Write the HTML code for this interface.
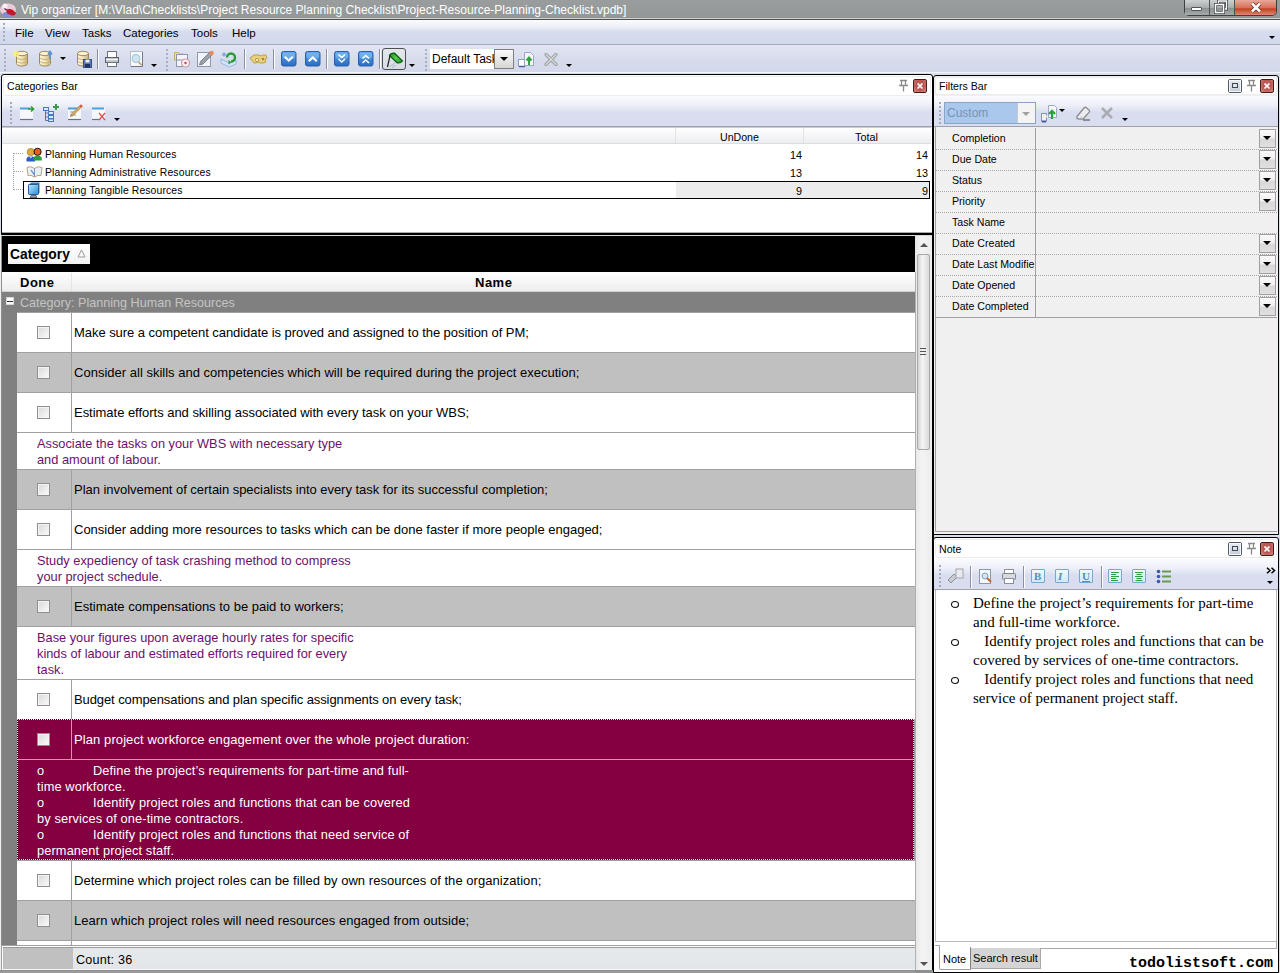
<!DOCTYPE html>
<html><head><meta charset="utf-8">
<style>
*{margin:0;padding:0;box-sizing:border-box}
html,body{width:1280px;height:973px;overflow:hidden;background:#d9deec;font-family:"Liberation Sans",sans-serif;font-size:12px;color:#000}
.a{position:absolute}
.t{position:absolute;white-space:pre;line-height:1}
.grip{position:absolute;width:2px;background:repeating-linear-gradient(#a4aac0 0 2px,transparent 2px 4px)}
.sep{position:absolute;width:1px;background:#8a90a0;box-shadow:1px 0 0 #fff}
.tri{position:absolute;width:0;height:0;border-left:4px solid transparent;border-right:4px solid transparent;border-top:4px solid #000}
.chk{position:absolute;width:13px;height:13px;border:1px solid #8e8f8f;background:linear-gradient(135deg,#d8d8d8,#fbfbfb);box-shadow:inset 0 0 0 1px #f4f4f4}
.note{color:#6c106c;font-size:12.8px;line-height:16px}
.bluebtn{display:none}
</style></head><body>
<div class="a" style="left:0px;top:0px;width:1280px;height:973px;background:#d9deec"></div>
<div class="a" style="left:0px;top:0px;width:1280px;height:20px;background:linear-gradient(#999d9e,#939798)"></div>
<div class="a" style="left:0px;top:17px;width:1280px;height:1px;background:#8e9293"></div>
<div class="a" style="left:0px;top:18px;width:1280px;height:1px;background:#d2d6d6"></div>
<div class="a" style="left:0px;top:19px;width:1280px;height:1px;background:#4a4e4e"></div>
<svg class="a" style="left:0px;top:2px" width="17" height="16" viewBox="0 0 17 16"><ellipse cx="8" cy="7.5" rx="8" ry="6" fill="#eccbd8"/><ellipse cx="8" cy="12.5" rx="5.5" ry="2.8" fill="#7a8ee0"/><path d="M6 7.5q4-1 7 .5l3 3q-1 3-4 2.5l-5-2z" fill="#c4182a"/><circle cx="5" cy="4" r="2.6" fill="#f8eef8"/><path d="M4.5 6.5l2 1.5" stroke="#403040" stroke-width="1.2"/></svg>
<div class="t" style="left:21px;top:4px;font-size:12px;color:#fff">Vip organizer [M:\Vlad\Checklists\Project Resource Planning Checklist\Project-Resource-Planning-Checklist.vpdb]</div>
<div class="a" style="left:1184px;top:0px;width:93px;height:16px;border:1px solid #3c4040;border-top:none;border-radius:0 0 5px 5px;overflow:hidden;background:#9da3a3"></div>
<div class="a" style="left:1185px;top:0px;width:24px;height:15px;background:linear-gradient(#cdd1d1,#a9afaf 50%,#8c9292 55%,#a4aaaa)"></div>
<div class="a" style="left:1209px;top:0px;width:1px;height:15px;background:#4e5252"></div>
<div class="a" style="left:1210px;top:0px;width:24px;height:15px;background:linear-gradient(#cdd1d1,#a9afaf 50%,#8c9292 55%,#a4aaaa)"></div>
<div class="a" style="left:1234px;top:0px;width:1px;height:15px;background:#4e5252"></div>
<div class="a" style="left:1235px;top:0px;width:41px;height:15px;background:linear-gradient(#e9a899,#d8705a 50%,#c4421f 60%,#dc8a76);border-radius:0 0 4px 0"></div>
<div class="a" style="left:1191px;top:7px;width:11px;height:4px;background:#fff;border:1px solid #555;border-radius:1px"></div>
<svg class="a" style="left:1213px;top:0px" width="16" height="15" viewBox="0 0 16 15"><path d="M5.5 3.5v-2.5h8v8h-2" fill="none" stroke="#3a3e3e" stroke-width="3"/><path d="M5.5 3.5v-2.5h8v8h-2" fill="none" stroke="#fff" stroke-width="1.4"/><rect x="2.5" y="4.5" width="8" height="8" fill="none" stroke="#3a3e3e" stroke-width="3"/><rect x="2.5" y="4.5" width="8" height="8" fill="none" stroke="#fff" stroke-width="1.6"/></svg>
<svg class="a" style="left:1250px;top:2px" width="12" height="11" viewBox="0 0 12 11"><path d="M2 1.5l8 8M10 1.5l-8 8" stroke="#6a2a1a" stroke-width="4"/><path d="M2 1.5l8 8M10 1.5l-8 8" stroke="#fff" stroke-width="2.6"/></svg>
<div class="a" style="left:0px;top:20px;width:1280px;height:25px;background:linear-gradient(#fafbfd 0,#eef0f8 28%,#d6dcee 50%,#d3d9ec 100%);border-bottom:1px solid #a3a8b5"></div>
<div class="a" style="left:3px;top:23px;width:2px;height:19px;background:repeating-linear-gradient(#a4aac0 0 2px,transparent 2px 4px)"></div>
<div class="t" style="left:15px;top:28px;font-size:11.5px">File</div>
<div class="t" style="left:45px;top:28px;font-size:11.5px">View</div>
<div class="t" style="left:82px;top:28px;font-size:11.5px">Tasks</div>
<div class="t" style="left:123px;top:28px;font-size:11.5px">Categories</div>
<div class="t" style="left:191px;top:28px;font-size:11.5px">Tools</div>
<div class="t" style="left:232px;top:28px;font-size:11.5px">Help</div>
<div class="a" style="left:1269px;top:36px;width:0;height:0;border-left:3px solid transparent;border-right:3px solid transparent;border-top:3px solid #000"></div>
<div class="a" style="left:0px;top:45px;width:1280px;height:28px;background:linear-gradient(#e2e6f3,#d6dbec 60%,#d3d8ea);border-bottom:1px solid #a0a5b2"></div>
<div class="a" style="left:0px;top:72px;width:1280px;height:1px;background:#f4f5f9"></div>
<div class="a" style="left:4px;top:49px;width:2px;height:2px;background:#98a0b6;border-radius:1px"></div>
<div class="a" style="left:4px;top:53px;width:2px;height:2px;background:#98a0b6;border-radius:1px"></div>
<div class="a" style="left:4px;top:57px;width:2px;height:2px;background:#98a0b6;border-radius:1px"></div>
<div class="a" style="left:4px;top:61px;width:2px;height:2px;background:#98a0b6;border-radius:1px"></div>
<div class="a" style="left:4px;top:65px;width:2px;height:2px;background:#98a0b6;border-radius:1px"></div>
<div class="a" style="left:4px;top:69px;width:2px;height:2px;background:#98a0b6;border-radius:1px"></div>
<svg class="a" style="left:12px;top:50px" width="18" height="18" viewBox="0 0 18 18"><defs><linearGradient id="dbg" x1="0" x2="1"><stop offset="0" stop-color="#fff8dc"/><stop offset=".5" stop-color="#f3e3b0"/><stop offset="1" stop-color="#c9b07a"/></linearGradient></defs><path d="M4.5 3.5v10c0 1.5 2.5 2.5 5.5 2.5s5.5-1 5.5-2.5v-10" fill="url(#dbg)" stroke="#9c8a5c"/><ellipse cx="10" cy="3.5" rx="5.5" ry="2.2" fill="#fbf2d2" stroke="#9c8a5c"/><path d="M5 8c1 1 3 1.5 5 1.5s4-.5 5-1.5M5 11.5c1 1 3 1.5 5 1.5s4-.5 5-1.5" fill="none" stroke="#b8a272" stroke-width=".8"/><circle cx="4" cy="4" r="3" fill="#fff46a" opacity=".8"/></svg>
<svg class="a" style="left:37px;top:50px" width="18" height="18" viewBox="0 0 18 18"><path d="M2.5 3.5v10c0 1.5 2.5 2.5 5.5 2.5s5.5-1 5.5-2.5v-10" fill="url(#dbg)" stroke="#9c8a5c"/><ellipse cx="8" cy="3.5" rx="5.5" ry="2.2" fill="#fbf2d2" stroke="#9c8a5c"/><path d="M3 8c1 1 3 1.5 5 1.5s4-.5 5-1.5M3 11.5c1 1 3 1.5 5 1.5s4-.5 5-1.5" fill="none" stroke="#b8a272" stroke-width=".8"/><path d="M13 9V2M11 4.5l2-3 2 3" fill="none" stroke="#5c8fd6" stroke-width="1.6"/></svg>
<div class="a" style="left:60px;top:57px;width:0;height:0;border-left:3.5px solid transparent;border-right:3.5px solid transparent;border-top:3.5px solid #000"></div>
<svg class="a" style="left:75px;top:50px" width="18" height="18" viewBox="0 0 18 18"><path d="M2.5 3.5v10c0 1.5 2.5 2.5 5.5 2.5s5.5-1 5.5-2.5v-10" fill="url(#dbg)" stroke="#9c8a5c"/><ellipse cx="8" cy="3.5" rx="5.5" ry="2.2" fill="#fbf2d2" stroke="#9c8a5c"/><path d="M3 8c1 1 3 1.5 5 1.5s4-.5 5-1.5M3 11.5c1 1 3 1.5 5 1.5s4-.5 5-1.5" fill="none" stroke="#b8a272" stroke-width=".8"/><rect x="8.5" y="9.5" width="8" height="8" fill="#5e74b0" stroke="#3a4c80"/><rect x="10.5" y="9.5" width="4" height="3" fill="#e8ecf6"/><rect x="10" y="14" width="5" height="3.5" fill="#203060"/></svg>
<div class="a" style="left:97px;top:49px;width:1px;height:20px;background:#8a90a0;box-shadow:1px 0 0 #fff"></div>
<svg class="a" style="left:104px;top:50px" width="16" height="18" viewBox="0 0 16 18"><rect x="3.5" y="1.5" width="9" height="6" fill="#fff" stroke="#6c7078"/><rect x="1.5" y="7.5" width="13" height="5" fill="#c4c8ce" stroke="#5c6068"/><path d="M2 9.5h12" stroke="#fff" stroke-width=".8"/><rect x="3.5" y="12.5" width="9" height="4" fill="#fff" stroke="#6c7078"/></svg>
<svg class="a" style="left:130px;top:50px" width="14" height="18" viewBox="0 0 14 18"><rect x=".5" y="1.5" width="12" height="15" fill="#f6f8fb" stroke="#b8bec8"/><path d="M12.5 2v14.5H1" stroke="#707680" fill="none"/><circle cx="6" cy="8.5" r="4" fill="#cde6f0" stroke="#9cc4d8"/><path d="M8.5 12l3 3" stroke="#d89060" stroke-width="1.6"/></svg>
<div class="a" style="left:151px;top:64px;width:0;height:0;border-left:3px solid transparent;border-right:3px solid transparent;border-top:3px solid #000"></div>
<div class="a" style="left:166px;top:49px;width:2px;height:2px;background:#98a0b6;border-radius:1px"></div>
<div class="a" style="left:166px;top:53px;width:2px;height:2px;background:#98a0b6;border-radius:1px"></div>
<div class="a" style="left:166px;top:57px;width:2px;height:2px;background:#98a0b6;border-radius:1px"></div>
<div class="a" style="left:166px;top:61px;width:2px;height:2px;background:#98a0b6;border-radius:1px"></div>
<div class="a" style="left:166px;top:65px;width:2px;height:2px;background:#98a0b6;border-radius:1px"></div>
<div class="a" style="left:166px;top:69px;width:2px;height:2px;background:#98a0b6;border-radius:1px"></div>
<svg class="a" style="left:173px;top:50px" width="18" height="18" viewBox="0 0 18 18"><path d="M1.5 2.5h4l1 1.5h4v6h-9z" fill="#f6e878" stroke="#c8b050"/><rect x="3.5" y="4.5" width="11" height="12" fill="#f2f4f8" stroke="#8c96a8"/><path d="M4 10h6" stroke="#8c96a8"/><circle cx="12.5" cy="13" r="4" fill="#f8eef0" stroke="#d09aa8" stroke-width="1.2"/><circle cx="12.5" cy="13" r="1.3" fill="#c05a70"/></svg>
<svg class="a" style="left:197px;top:50px" width="18" height="18" viewBox="0 0 18 18"><rect x=".5" y="2.5" width="13" height="14" fill="#f3f5fa" stroke="#8e97a9"/><path d="M2.5 15l1-3.5 9-9 2.5 2.5-9 9z" fill="#9ca2ac" stroke="#6c727c" stroke-width=".8"/><circle cx="14.5" cy="3" r="2.3" fill="#e88a5a"/></svg>
<svg class="a" style="left:219px;top:50px" width="19" height="18" viewBox="0 0 19 18"><path d="M3 4.5a2 2 0 1 1 4 0a2 2 0 1 1-4 0" fill="#90a8e0"/><path d="M2 9l8 4 7-3v4l-7 3-8-4z" fill="#d6e6fa" stroke="#98b4e0"/><path d="M8 7.5a4 4 0 1 1 4 4" fill="none" stroke="#2a9a3a" stroke-width="2.4"/><path d="M9.5 10l3 2.5-3 2z" fill="#2a9a3a"/></svg>
<div class="a" style="left:244px;top:49px;width:1px;height:20px;background:#8a90a0;box-shadow:1px 0 0 #fff"></div>
<svg class="a" style="left:249px;top:53px" width="19" height="12" viewBox="0 0 19 12"><path d="M1 5l4-3h5l2 1 2-1h3l1 3-2 2 1 2-3 1h-3l-2-1-2 1H5z" fill="#e8d080" stroke="#b89840" stroke-width=".9"/><circle cx="8" cy="7" r="1.6" fill="#fff4c0" stroke="#a88830" stroke-width=".8"/><circle cx="14" cy="6" r="1.3" fill="#a88830"/></svg>
<div class="a" style="left:273px;top:49px;width:1px;height:20px;background:#8a90a0;box-shadow:1px 0 0 #fff"></div>
<svg class="a" style="left:281px;top:51px" width="16" height="16" viewBox="0 0 16 16"><defs><linearGradient id="bb" x1="0" y1="0" x2="0" y2="1"><stop offset="0" stop-color="#5aa2e8"/><stop offset="1" stop-color="#2c6cc0"/></linearGradient></defs><rect x=".5" y=".5" width="14.5" height="14.5" rx="2" fill="url(#bb)" stroke="#2a5ea8"/><rect x="1.5" y="1.5" width="12.5" height="6" rx="1.5" fill="#8cc4f2" opacity=".55"/><path d="M4.5 6.5L7.75 9.5L11 6.5" fill="none" stroke="#fff" stroke-width="2.1" stroke-linecap="square"/></svg>
<svg class="a" style="left:305px;top:51px" width="16" height="16" viewBox="0 0 16 16"><defs><linearGradient id="bb" x1="0" y1="0" x2="0" y2="1"><stop offset="0" stop-color="#5aa2e8"/><stop offset="1" stop-color="#2c6cc0"/></linearGradient></defs><rect x=".5" y=".5" width="14.5" height="14.5" rx="2" fill="url(#bb)" stroke="#2a5ea8"/><rect x="1.5" y="1.5" width="12.5" height="6" rx="1.5" fill="#8cc4f2" opacity=".55"/><path d="M4.5 9.5L7.75 6.5L11 9.5" fill="none" stroke="#fff" stroke-width="2.1" stroke-linecap="square"/></svg>
<div class="a" style="left:326px;top:49px;width:1px;height:20px;background:#8a90a0;box-shadow:1px 0 0 #fff"></div>
<svg class="a" style="left:334px;top:51px" width="16" height="16" viewBox="0 0 16 16"><rect x=".5" y=".5" width="14.5" height="14.5" rx="2" fill="url(#bb)" stroke="#2a5ea8"/><rect x="1.5" y="1.5" width="12.5" height="6" rx="1.5" fill="#8cc4f2" opacity=".55"/><path d="M4.5 3.5L7.75 6.5L11 3.5M4.5 8L7.75 11L11 8" fill="none" stroke="#fff" stroke-width="1.5"/></svg>
<svg class="a" style="left:358px;top:51px" width="16" height="16" viewBox="0 0 16 16"><rect x=".5" y=".5" width="14.5" height="14.5" rx="2" fill="url(#bb)" stroke="#2a5ea8"/><rect x="1.5" y="1.5" width="12.5" height="6" rx="1.5" fill="#8cc4f2" opacity=".55"/><path d="M4.5 7.5L7.75 4.5L11 7.5M4.5 12L7.75 9L11 12" fill="none" stroke="#fff" stroke-width="1.5"/></svg>
<div class="a" style="left:379px;top:49px;width:1px;height:20px;background:#8a90a0;box-shadow:1px 0 0 #fff"></div>
<div class="a" style="left:382px;top:48px;width:24px;height:22px;border:1px solid #4c5054;border-radius:3px;background:linear-gradient(#e4e8ec,#d8dce2)"></div>
<svg class="a" style="left:384px;top:50px" width="20" height="19" viewBox="0 0 20 19"><defs><radialGradient id="gg" cx=".5" cy=".5" r=".6"><stop offset="0" stop-color="#5ad050"/><stop offset="1" stop-color="#189a20"/></radialGradient></defs><path d="M6 16.5l5-3.5M8 17.5l4-2.5" stroke="#a8b8d0" stroke-width="1"/><path d="M5.5 5.5Q6.5 3 10.5 3.2L18.5 11q-2 2.5-5.5 1.8z" fill="url(#gg)" stroke="#0c5a14" stroke-width="1.2"/><path d="M6 5.5L3.5 17" stroke="#1a2a1a" stroke-width="1.2"/></svg>
<div class="a" style="left:409px;top:64px;width:0;height:0;border-left:3px solid transparent;border-right:3px solid transparent;border-top:3px solid #000"></div>
<div class="a" style="left:425px;top:49px;width:2px;height:2px;background:#98a0b6;border-radius:1px"></div>
<div class="a" style="left:425px;top:53px;width:2px;height:2px;background:#98a0b6;border-radius:1px"></div>
<div class="a" style="left:425px;top:57px;width:2px;height:2px;background:#98a0b6;border-radius:1px"></div>
<div class="a" style="left:425px;top:61px;width:2px;height:2px;background:#98a0b6;border-radius:1px"></div>
<div class="a" style="left:425px;top:65px;width:2px;height:2px;background:#98a0b6;border-radius:1px"></div>
<div class="a" style="left:425px;top:69px;width:2px;height:2px;background:#98a0b6;border-radius:1px"></div>
<div class="a" style="left:430px;top:49px;width:65px;height:20px;background:#fff"></div>
<div class="t" style="left:432px;top:53px;font-size:12px;width:62px;overflow:hidden">Default Task</div>
<div class="a" style="left:494px;top:49px;width:20px;height:20px;border:1px solid #808080;background:linear-gradient(#fafafa,#e8e8e8 50%,#d6d6d6)"></div>
<div class="a" style="left:500px;top:57px;width:0;height:0;border-left:4px solid transparent;border-right:4px solid transparent;border-top:4px solid #000"></div>
<svg class="a" style="left:518px;top:50px" width="18" height="18" viewBox="0 0 18 18"><path d="M.5 9.5h6v7h-6z" fill="#fff" stroke="#8898c0"/><path d="M1 16.5h6" stroke="#4a60a0" stroke-width="1.5"/><path d="M6.5 2.5h6l3 3v10h-9z" fill="#f4f6fa" stroke="#98a8c4"/><path d="M11 15V8M8.5 10.5L11 7.5l2.5 3" fill="none" stroke="#32a040" stroke-width="2"/></svg>
<svg class="a" style="left:544px;top:53px" width="14" height="13" viewBox="0 0 14 13"><path d="M2 1.5l10 10M12 1.5l-10 10" stroke="#9da0a4" stroke-width="3.2" stroke-linecap="round"/><path d="M2 1.5l10 10M12 1.5l-10 10" stroke="#d8dadc" stroke-width="1.2" stroke-linecap="round"/></svg>
<div class="a" style="left:566px;top:64px;width:0;height:0;border-left:3px solid transparent;border-right:3px solid transparent;border-top:3px solid #000"></div>
<div class="a" style="left:1px;top:74px;width:932px;height:162px;background:#fff;border:1px solid #000;border-radius:3px 3px 0 0"></div>
<div class="a" style="left:3px;top:76px;width:928px;height:20px;border:1px solid #ececec;border-radius:3px;background:#fff"></div>
<div class="t" style="left:7px;top:81px;font-size:10.6px">Categories Bar</div>
<svg class="a" style="left:898px;top:79px" width="11" height="13" viewBox="0 0 11 13"><path d="M2 1.5h7M3.5 1.5v5M7.5 1.5v5M1 6.5h9M5.5 6.5v6" stroke="#8a8a8a" stroke-width="1.3" fill="none"/></svg>
<div class="a" style="left:913px;top:79px;width:14px;height:14px;border:1px solid #4a1a18;border-radius:2px;background:radial-gradient(ellipse at 50% 40%,#c86a68 0,#b85450 45%,#d89088 100%)"></div>
<svg class="a" style="left:916px;top:82px" width="8" height="8" viewBox="0 0 8 8"><path d="M1.5 1.5l5 5M6.5 1.5l-5 5" stroke="#fff" stroke-width="1.7"/></svg>
<div class="a" style="left:2px;top:96px;width:930px;height:31px;background:linear-gradient(#fafbfe 0,#eef0f8 30%,#d8ddef 55%,#d9ddef 100%);border-bottom:1px solid #9ca1ac"></div>
<div class="a" style="left:10px;top:102px;width:2px;height:22px;background:repeating-linear-gradient(#a4aac0 0 2px,transparent 2px 4px)"></div>
<svg class="a" style="left:19px;top:104px" width="17" height="17" viewBox="0 0 17 17"><rect x="1" y="4" width="13" height="11" fill="#f6f8fb"/><path d="M1 4.5h10" stroke="#4aa0e0" stroke-width="2"/><path d="M1 15.5h13" stroke="#6a7280" stroke-width="1.2"/><path d="M9 5h5M12 2.5L14.5 5 12 7.5" fill="none" stroke="#2a9a3a" stroke-width="1.6"/></svg>
<svg class="a" style="left:42px;top:103px" width="18" height="19" viewBox="0 0 18 19"><rect x="1.5" y="4.5" width="5" height="3" fill="#dbe8f6" stroke="#4a78b8"/><rect x="6.5" y="8.5" width="5" height="3" fill="#dbe8f6" stroke="#4a78b8"/><rect x="6.5" y="12.5" width="5" height="3" fill="#dbe8f6" stroke="#4a78b8"/><rect x="6.5" y="16" width="5" height="2.5" fill="#dbe8f6" stroke="#4a78b8"/><path d="M3.5 7.5v10h3M3.5 10h3M3.5 14h3" fill="none" stroke="#4a78b8"/><path d="M11 4h6M14 1v6" stroke="#3a9a4a" stroke-width="2"/></svg>
<svg class="a" style="left:67px;top:104px" width="17" height="17" viewBox="0 0 17 17"><rect x="1" y="4" width="13" height="11" fill="#f6f8fb"/><path d="M1 4.5h10" stroke="#4aa0e0" stroke-width="2"/><path d="M1 15.5h13" stroke="#6a7280" stroke-width="1.2"/><path d="M3 8h5M3 11h6" stroke="#8a98b0"/><path d="M3.5 12.5l1-2.5 8-8 1.5 1.5-8 8z" fill="#d8b060" stroke="#a07840" stroke-width=".8"/><circle cx="14" cy="2" r="1.6" fill="#d86040"/></svg>
<svg class="a" style="left:91px;top:104px" width="17" height="17" viewBox="0 0 17 17"><rect x="1" y="4" width="13" height="11" fill="#f6f8fb"/><path d="M1 4.5h12" stroke="#4aa0e0" stroke-width="2"/><path d="M1 15.5h8" stroke="#6a7280" stroke-width="1.2"/><path d="M8 9l6 7M14 9l-6 7" stroke="#e05050" stroke-width="1.3"/></svg>
<div class="a" style="left:114px;top:118px;width:0;height:0;border-left:3px solid transparent;border-right:3px solid transparent;border-top:3px solid #000"></div>
<div class="a" style="left:2px;top:127px;width:929px;height:17px;background:linear-gradient(#ffffff,#f5f6f8 50%,#eceef1);border-top:1px solid #c8ccd4;border-bottom:1px solid #dcdcdc"></div>
<div class="a" style="left:675px;top:128px;width:1px;height:15px;background:#e2e2e2"></div>
<div class="a" style="left:803px;top:128px;width:1px;height:15px;background:#e2e2e2"></div>
<div class="t" style="left:720px;top:132px;font-size:10.6px">UnDone</div>
<div class="t" style="left:855px;top:132px;font-size:10.8px">Total</div>
<div class="a" style="left:13px;top:153px;width:1px;height:37px;border-left:1px dotted #a0a0a0"></div>
<div class="a" style="left:13px;top:153px;width:10px;height:1px;border-top:1px dotted #a0a0a0"></div>
<div class="a" style="left:13px;top:171px;width:10px;height:1px;border-top:1px dotted #a0a0a0"></div>
<div class="a" style="left:13px;top:189px;width:10px;height:1px;border-top:1px dotted #a0a0a0"></div>
<svg class="a" style="left:26px;top:147px" width="17" height="15" viewBox="0 0 17 15"><circle cx="4.8" cy="5" r="3.6" fill="#e0a838" stroke="#a07820" stroke-width=".7"/><path d="M.5 14.5v-2c0-2 1.5-3.2 4.3-3.2s4.3 1.2 4.3 3.2v2z" fill="#2c5cc8"/><path d="M3.5 9.5l1.3 2 1.3-2" fill="#fff"/><circle cx="11.6" cy="4.8" r="3.6" fill="#e06028" stroke="#201010" stroke-width="1"/><path d="M7.4 13.5v-2c0-1.8 1.6-2.8 4.2-2.8s4.2 1 4.2 2.8v2z" fill="#28a040"/></svg>
<svg class="a" style="left:26px;top:165px" width="17" height="13" viewBox="0 0 17 13"><path d="M1 2.5q3.5-2 7.5 1 4-3 7.5-1l-1 8q-3-1-6.5 1.5-3.5-2.5-6.5-1.5z" fill="#e8f0f8" stroke="#c0a070" stroke-width="1"/><path d="M8.5 3.5v8" stroke="#8090c0"/><path d="M5 5l3.5 5" stroke="#5a88d0" stroke-width="1.3"/></svg>
<div class="a" style="left:23px;top:181px;width:907px;height:18px;border:1px solid #000"></div>
<div class="a" style="left:676px;top:182px;width:253px;height:16px;background:#ececec"></div>
<svg class="a" style="left:27px;top:182px" width="14" height="16" viewBox="0 0 14 16"><defs><linearGradient id="mon" x1="0" y1="0" x2="1" y2="1"><stop offset="0" stop-color="#b8ecff"/><stop offset="1" stop-color="#2a8ad8"/></linearGradient></defs><path d="M1.5 2.5l3-2h8v10l-2 2h-9z" fill="#3a7ab8"/><rect x="1.5" y="2.5" width="10" height="10" rx="1" fill="url(#mon)" stroke="#2a5a90"/><path d="M4 13.5h5l1 2H3z" fill="#9aa0a8" stroke="#505860" stroke-width=".8"/></svg>
<div class="t" style="left:45px;top:150px;font-size:10.4px;letter-spacing:0.087px">Planning Human Resources</div>
<div class="t" style="left:742px;top:150px;font-size:10.8px;width:60px;text-align:right">14</div>
<div class="t" style="left:868px;top:150px;font-size:10.8px;width:60px;text-align:right">14</div>
<div class="t" style="left:45px;top:168px;font-size:10.4px;letter-spacing:0.16px">Planning Administrative Resources</div>
<div class="t" style="left:742px;top:168px;font-size:10.8px;width:60px;text-align:right">13</div>
<div class="t" style="left:868px;top:168px;font-size:10.8px;width:60px;text-align:right">13</div>
<div class="t" style="left:45px;top:186px;font-size:10.4px;letter-spacing:0.115px">Planning Tangible Resources</div>
<div class="t" style="left:742px;top:186px;font-size:10.8px;width:60px;text-align:right">9</div>
<div class="t" style="left:868px;top:186px;font-size:10.8px;width:60px;text-align:right">9</div>
<div class="a" style="left:2px;top:232px;width:930px;height:1px;background:#a8a8a8"></div>
<div class="a" style="left:1px;top:233px;width:932px;height:2px;background:#000"></div>
<div class="a" style="left:0px;top:235px;width:934px;height:738px;background:#8c9090"></div>
<div class="a" style="left:0px;top:235px;width:932px;height:1px;background:#d8d8d8"></div>
<div class="a" style="left:0px;top:234px;width:1px;height:739px;background:#eeeeee"></div>
<div class="a" style="left:2px;top:236px;width:913px;height:36px;background:#000"></div>
<div class="a" style="left:8px;top:244px;width:82px;height:20px;background:linear-gradient(#ffffff,#f2f2f2)"></div>
<div class="t" style="left:10px;top:248px;font-size:13.8px;font-weight:bold">Category</div>
<svg class="a" style="left:77px;top:249px" width="9" height="9" viewBox="0 0 9 9"><path d="M4.5 1L8 8H1z" fill="none" stroke="#9a9a9a"/></svg>
<div class="a" style="left:2px;top:272px;width:913px;height:20px;background:linear-gradient(#ffffff,#f6f6f6 50%,#eeeeee);border-bottom:1px solid #d0d0d0"></div>
<div class="a" style="left:71px;top:273px;width:1px;height:18px;background:#e4e4e4"></div>
<div class="t" style="left:20px;top:276px;font-size:13px;font-weight:bold;letter-spacing:0.5px">Done</div>
<div class="t" style="left:475px;top:276px;font-size:13px;font-weight:bold;letter-spacing:0.5px">Name</div>
<div class="a" style="left:2px;top:292px;width:913px;height:654px;background:#808080"></div>
<div class="a" style="left:6px;top:297px;width:8px;height:8px;background:#fff;border:1px solid #d8d8d8"></div>
<div class="a" style="left:7px;top:301px;width:6px;height:1px;background:#303030"></div>
<div class="t" style="left:20px;top:297px;font-size:12.6px;color:#c4c4c4">Category: Planning Human Resources</div>
<div class="a" style="left:17px;top:312px;width:898px;height:40px;background:#fff;border-top:1px solid #a0a0a0"></div>
<div class="a" style="left:71px;top:313px;width:1px;height:39px;background:#a0a0a0"></div>
<div class="chk" style="left:37px;top:326px"></div>
<div class="t" style="left:74px;top:326px;font-size:13px;color:#000;letter-spacing:-0.053px">Make sure a competent candidate is proved and assigned to the position of PM;</div>
<div class="a" style="left:17px;top:352px;width:898px;height:40px;background:#c0c0c0;border-top:1px solid #a0a0a0"></div>
<div class="a" style="left:71px;top:353px;width:1px;height:39px;background:#a0a0a0"></div>
<div class="chk" style="left:37px;top:366px"></div>
<div class="t" style="left:74px;top:366px;font-size:13px;color:#000;letter-spacing:0.011px">Consider all skills and competencies which will be required during the project execution;</div>
<div class="a" style="left:17px;top:392px;width:898px;height:40px;background:#fff;border-top:1px solid #a0a0a0"></div>
<div class="a" style="left:71px;top:393px;width:1px;height:39px;background:#a0a0a0"></div>
<div class="chk" style="left:37px;top:406px"></div>
<div class="t" style="left:74px;top:406px;font-size:13px;color:#000;letter-spacing:-0.029px">Estimate efforts and skilling associated with every task on your WBS;</div>
<div class="a" style="left:17px;top:432px;width:898px;height:37px;background:#fff;border-top:1px solid #a0a0a0"></div>
<div class="t note" style="left:37px;top:436px">Associate the tasks on your WBS with necessary type
and amount of labour.</div>
<div class="a" style="left:17px;top:469px;width:898px;height:40px;background:#c0c0c0;border-top:1px solid #a0a0a0"></div>
<div class="a" style="left:71px;top:470px;width:1px;height:39px;background:#a0a0a0"></div>
<div class="chk" style="left:37px;top:483px"></div>
<div class="t" style="left:74px;top:483px;font-size:13px;color:#000;letter-spacing:-0.035px">Plan involvement of certain specialists into every task for its successful completion;</div>
<div class="a" style="left:17px;top:509px;width:898px;height:40px;background:#fff;border-top:1px solid #a0a0a0"></div>
<div class="a" style="left:71px;top:510px;width:1px;height:39px;background:#a0a0a0"></div>
<div class="chk" style="left:37px;top:523px"></div>
<div class="t" style="left:74px;top:523px;font-size:13px;color:#000;letter-spacing:-0.006px">Consider adding more resources to tasks which can be done faster if more people engaged;</div>
<div class="a" style="left:17px;top:549px;width:898px;height:37px;background:#fff;border-top:1px solid #a0a0a0"></div>
<div class="t note" style="left:37px;top:553px">Study expediency of task crashing method to compress
your project schedule.</div>
<div class="a" style="left:17px;top:586px;width:898px;height:40px;background:#c0c0c0;border-top:1px solid #a0a0a0"></div>
<div class="a" style="left:71px;top:587px;width:1px;height:39px;background:#a0a0a0"></div>
<div class="chk" style="left:37px;top:600px"></div>
<div class="t" style="left:74px;top:600px;font-size:13px;color:#000;letter-spacing:0.0px">Estimate compensations to be paid to workers;</div>
<div class="a" style="left:17px;top:626px;width:898px;height:53px;background:#fff;border-top:1px solid #a0a0a0"></div>
<div class="t note" style="left:37px;top:630px">Base your figures upon average hourly rates for specific
kinds of labour and estimated efforts required for every
task.</div>
<div class="a" style="left:17px;top:679px;width:898px;height:40px;background:#fff;border-top:1px solid #a0a0a0"></div>
<div class="a" style="left:71px;top:680px;width:1px;height:39px;background:#a0a0a0"></div>
<div class="chk" style="left:37px;top:693px"></div>
<div class="t" style="left:74px;top:693px;font-size:13px;color:#000;letter-spacing:-0.094px">Budget compensations and plan specific assignments on every task;</div>
<div class="a" style="left:17px;top:719px;width:898px;height:40px;background:#840040;border-top:1px solid #e090b0"></div>
<div class="a" style="left:71px;top:720px;width:1px;height:39px;background:#e090b0"></div>
<div class="chk" style="left:37px;top:733px"></div>
<div class="t" style="left:74px;top:733px;font-size:13px;color:#fff;letter-spacing:0.089px">Plan project workforce engagement over the whole project duration:</div>
<div class="a" style="left:17px;top:759px;width:898px;height:100px;background:#840040;border-top:1px solid #e090b0"></div>
<div class="t note" style="left:37px;top:763px;color:#fff;letter-spacing:0.12px">o
time workforce.
o
by services of one-time contractors.
o
permanent project staff.</div>
<div class="t note" style="left:93px;top:763px;color:#fff;letter-spacing:0.12px">Define the project’s requirements for part-time and full-

Identify project roles and functions that can be covered

Identify project roles and functions that need service of
</div>
<div class="a" style="left:17px;top:860px;width:898px;height:40px;background:#fff;border-top:1px solid #a0a0a0"></div>
<div class="a" style="left:71px;top:861px;width:1px;height:39px;background:#a0a0a0"></div>
<div class="chk" style="left:37px;top:874px"></div>
<div class="t" style="left:74px;top:874px;font-size:13px;color:#000;letter-spacing:0.042px">Determine which project roles can be filled by own resources of the organization;</div>
<div class="a" style="left:17px;top:900px;width:898px;height:40px;background:#c0c0c0;border-top:1px solid #a0a0a0"></div>
<div class="a" style="left:71px;top:901px;width:1px;height:39px;background:#a0a0a0"></div>
<div class="chk" style="left:37px;top:914px"></div>
<div class="t" style="left:74px;top:914px;font-size:13px;color:#000;letter-spacing:0.041px">Learn which project roles will need resources engaged from outside;</div>
<div class="a" style="left:17px;top:940px;width:898px;height:6px;background:#fff;border-top:1px solid #a0a0a0"></div>
<div class="a" style="left:71px;top:941px;width:1px;height:5px;background:#a0a0a0"></div>
<div class="a" style="left:17px;top:719px;width:897px;height:1px;background:repeating-linear-gradient(90deg,#ffd8ec 0 1px,#3a0018 1px 2px)"></div>
<div class="a" style="left:17px;top:859px;width:897px;height:1px;background:repeating-linear-gradient(90deg,#ffd8ec 0 1px,#3a0018 1px 2px)"></div>
<div class="a" style="left:17px;top:719px;width:1px;height:141px;background:repeating-linear-gradient(#ffd8ec 0 1px,#3a0018 1px 2px)"></div>
<div class="a" style="left:913px;top:719px;width:1px;height:141px;background:repeating-linear-gradient(#ffd8ec 0 1px,#3a0018 1px 2px)"></div>
<div class="a" style="left:914px;top:719px;width:1px;height:141px;background:#a0a0a0"></div>
<div class="a" style="left:1px;top:945px;width:914px;height:27px;background:#a0a0a0"></div>
<div class="a" style="left:2px;top:946px;width:913px;height:1px;background:#fdfdfd"></div>
<div class="a" style="left:2px;top:947px;width:913px;height:1px;background:#9a9a9a"></div>
<div class="a" style="left:2px;top:946px;width:1px;height:24px;background:#fdfdfd"></div>
<div class="a" style="left:3px;top:948px;width:70px;height:21px;background:#c0c0c0"></div>
<div class="a" style="left:73px;top:948px;width:842px;height:21px;background:linear-gradient(#e6e9ec,#e2e5e9)"></div>
<div class="a" style="left:3px;top:969px;width:912px;height:1px;background:#f6f6f6"></div>
<div class="t" style="left:76px;top:954px;font-size:12.6px;letter-spacing:0.2px">Count: 36</div>
<div class="a" style="left:915px;top:236px;width:17px;height:734px;background:linear-gradient(90deg,#e6e6e6,#f4f4f4 40%,#ececec)"></div>
<div class="a" style="left:915px;top:272px;width:1px;height:698px;background:#b0b0b0"></div>
<div class="a" style="left:920px;top:243px;width:0;height:0;border-left:4px solid transparent;border-right:4px solid transparent;border-bottom:4px solid #555"></div>
<div class="a" style="left:917px;top:254px;width:13px;height:196px;border:1px solid #a8a8a8;border-radius:2px;background:linear-gradient(90deg,#d4d4d4,#f4f4f4 40%,#dadada)"></div>
<div class="a" style="left:920px;top:348px;width:6px;height:1px;background:#555;box-shadow:0 3px 0 #555,0 6px 0 #555"></div>
<div class="a" style="left:920px;top:962px;width:0;height:0;border-left:4px solid transparent;border-right:4px solid transparent;border-top:4px solid #555"></div>
<div class="a" style="left:932px;top:234px;width:2px;height:739px;background:#000"></div>
<div class="a" style="left:0px;top:970px;width:934px;height:3px;background:#8c9090"></div>
<div class="a" style="left:0px;top:971px;width:915px;height:2px;background:#9a9a9a"></div>
<div class="a" style="left:933px;top:75px;width:346px;height:460px;background:#f0f0f0;border:1px solid #000;border-radius:3px 3px 0 0"></div>
<div class="a" style="left:935px;top:77px;width:342px;height:18px;border:1px solid #ececec;border-radius:3px;background:#fff"></div>
<div class="t" style="left:939px;top:81px;font-size:10.6px">Filters Bar</div>
<div class="a" style="left:1228px;top:79px;width:14px;height:14px;border:1px solid #505a66;border-radius:2px;background:linear-gradient(#e8ecf2,#c4ccd8)"></div>
<div class="a" style="left:1229px;top:80px;width:12px;height:12px;border:1px solid #f4f6f8"></div>
<div class="a" style="left:1232px;top:83px;width:6px;height:5px;border:1.5px solid #404852;background:#dde2ea"></div>
<svg class="a" style="left:1246px;top:79px" width="11" height="13" viewBox="0 0 11 13"><path d="M2 1.5h7M3.5 1.5v5M7.5 1.5v5M1 6.5h9M5.5 6.5v6" stroke="#8a8a8a" stroke-width="1.3" fill="none"/></svg>
<div class="a" style="left:1260px;top:79px;width:14px;height:14px;border:1px solid #4a1a18;border-radius:2px;background:radial-gradient(ellipse at 50% 40%,#c86a68 0,#b85450 45%,#d89088 100%)"></div>
<svg class="a" style="left:1263px;top:82px" width="8" height="8" viewBox="0 0 8 8"><path d="M1.5 1.5l5 5M6.5 1.5l-5 5" stroke="#fff" stroke-width="1.7"/></svg>
<div class="a" style="left:934px;top:96px;width:344px;height:31px;background:linear-gradient(#fafbfe 0,#eef0f8 30%,#d8ddef 55%,#d9ddef 100%);border-bottom:1px solid #9ca1ac"></div>
<div class="a" style="left:939px;top:102px;width:2px;height:22px;background:repeating-linear-gradient(#a4aac0 0 2px,transparent 2px 4px)"></div>
<div class="a" style="left:944px;top:102px;width:92px;height:22px;background:#a9c8ec;border:1px solid #8aa4c8"></div>
<div class="t" style="left:947px;top:107px;font-size:12px;color:#7a92b4">Custom</div>
<div class="a" style="left:1017px;top:103px;width:18px;height:20px;background:#f4f4f4;border-left:1px solid #c8c8c8"></div>
<div class="a" style="left:1022px;top:112px;width:0;height:0;border-left:4px solid transparent;border-right:4px solid transparent;border-top:4px solid #a0a0a0"></div>
<svg class="a" style="left:1040px;top:104px" width="18" height="20" viewBox="0 0 18 20"><path d="M8.5 1.5h6l2 2v10h-8z" fill="#f4f6fa" stroke="#9aaac4"/><path d="M1.5 9.5h5v8h-5z" fill="#f0f2f8" stroke="#8090b8"/><path d="M2 17.5h4" stroke="#4a5a98" stroke-width="2"/><path d="M5 12.5h3" stroke="#fff0b0" stroke-width="2"/><path d="M12 15V7.5M9 10l3-3.2 3 3.2" fill="none" stroke="#2aa040" stroke-width="2.2"/></svg>
<div class="a" style="left:1059px;top:109px;width:0;height:0;border-left:3px solid transparent;border-right:3px solid transparent;border-top:3px solid #000"></div>
<svg class="a" style="left:1074px;top:105px" width="18" height="17" viewBox="0 0 18 17"><path d="M3 11.5l7-8.5q1.2-1.2 2.4-.2l2.8 2.4q1 1-.1 2.2L9 14H4.5q-2.4-.6-1.5-2.5z" fill="#ececee" stroke="#8c8e94" stroke-width="1.4"/><path d="M6 13.5l2-2.5" stroke="#c8c8cc"/><path d="M9 15h7" stroke="#7a7c82" stroke-width="1.6"/></svg>
<svg class="a" style="left:1100px;top:106px" width="14" height="14" viewBox="0 0 14 14"><path d="M2 2l10 10M12 2L2 12" stroke="#a9acb0" stroke-width="2.5"/></svg>
<div class="a" style="left:1122px;top:118px;width:0;height:0;border-left:3px solid transparent;border-right:3px solid transparent;border-top:3px solid #000"></div>
<div class="a" style="left:935px;top:127px;width:342px;height:191px;background:#f0f0f0;border-left:1px solid #a0a0a0;border-bottom:1px solid #a0a0a0"></div>
<div class="a" style="left:1035px;top:128px;width:1px;height:189px;background:#a0a0a0"></div>
<div class="t" style="left:952px;top:133px;font-size:10.6px;width:83px;overflow:hidden">Completion</div>
<div class="a" style="left:936px;top:149px;width:341px;height:1px;border-top:1px dotted #a8a8a8"></div>
<div class="a" style="left:1259px;top:129px;width:17px;height:19px;border:1px solid #a0a0a0;background:linear-gradient(#fafafa 0,#f0f0f0 45%,#d8d8d8 55%,#e0e0e0)"></div>
<div class="a" style="left:1263px;top:136px;width:0;height:0;border-left:4px solid transparent;border-right:4px solid transparent;border-top:4px solid #000"></div>
<div class="t" style="left:952px;top:154px;font-size:10.6px;width:83px;overflow:hidden">Due Date</div>
<div class="a" style="left:936px;top:170px;width:341px;height:1px;border-top:1px dotted #a8a8a8"></div>
<div class="a" style="left:1259px;top:150px;width:17px;height:19px;border:1px solid #a0a0a0;background:linear-gradient(#fafafa 0,#f0f0f0 45%,#d8d8d8 55%,#e0e0e0)"></div>
<div class="a" style="left:1263px;top:157px;width:0;height:0;border-left:4px solid transparent;border-right:4px solid transparent;border-top:4px solid #000"></div>
<div class="t" style="left:952px;top:175px;font-size:10.6px;width:83px;overflow:hidden">Status</div>
<div class="a" style="left:936px;top:191px;width:341px;height:1px;border-top:1px dotted #a8a8a8"></div>
<div class="a" style="left:1259px;top:171px;width:17px;height:19px;border:1px solid #a0a0a0;background:linear-gradient(#fafafa 0,#f0f0f0 45%,#d8d8d8 55%,#e0e0e0)"></div>
<div class="a" style="left:1263px;top:178px;width:0;height:0;border-left:4px solid transparent;border-right:4px solid transparent;border-top:4px solid #000"></div>
<div class="t" style="left:952px;top:196px;font-size:10.6px;width:83px;overflow:hidden">Priority</div>
<div class="a" style="left:936px;top:212px;width:341px;height:1px;border-top:1px dotted #a8a8a8"></div>
<div class="a" style="left:1259px;top:192px;width:17px;height:19px;border:1px solid #a0a0a0;background:linear-gradient(#fafafa 0,#f0f0f0 45%,#d8d8d8 55%,#e0e0e0)"></div>
<div class="a" style="left:1263px;top:199px;width:0;height:0;border-left:4px solid transparent;border-right:4px solid transparent;border-top:4px solid #000"></div>
<div class="t" style="left:952px;top:217px;font-size:10.6px;width:83px;overflow:hidden">Task Name</div>
<div class="a" style="left:936px;top:233px;width:341px;height:1px;border-top:1px dotted #a8a8a8"></div>
<div class="t" style="left:952px;top:238px;font-size:10.6px;width:83px;overflow:hidden">Date Created</div>
<div class="a" style="left:936px;top:254px;width:341px;height:1px;border-top:1px dotted #a8a8a8"></div>
<div class="a" style="left:1259px;top:234px;width:17px;height:19px;border:1px solid #a0a0a0;background:linear-gradient(#fafafa 0,#f0f0f0 45%,#d8d8d8 55%,#e0e0e0)"></div>
<div class="a" style="left:1263px;top:241px;width:0;height:0;border-left:4px solid transparent;border-right:4px solid transparent;border-top:4px solid #000"></div>
<div class="t" style="left:952px;top:259px;font-size:10.6px;width:83px;overflow:hidden">Date Last Modifie</div>
<div class="a" style="left:936px;top:275px;width:341px;height:1px;border-top:1px dotted #a8a8a8"></div>
<div class="a" style="left:1259px;top:255px;width:17px;height:19px;border:1px solid #a0a0a0;background:linear-gradient(#fafafa 0,#f0f0f0 45%,#d8d8d8 55%,#e0e0e0)"></div>
<div class="a" style="left:1263px;top:262px;width:0;height:0;border-left:4px solid transparent;border-right:4px solid transparent;border-top:4px solid #000"></div>
<div class="t" style="left:952px;top:280px;font-size:10.6px;width:83px;overflow:hidden">Date Opened</div>
<div class="a" style="left:936px;top:296px;width:341px;height:1px;border-top:1px dotted #a8a8a8"></div>
<div class="a" style="left:1259px;top:276px;width:17px;height:19px;border:1px solid #a0a0a0;background:linear-gradient(#fafafa 0,#f0f0f0 45%,#d8d8d8 55%,#e0e0e0)"></div>
<div class="a" style="left:1263px;top:283px;width:0;height:0;border-left:4px solid transparent;border-right:4px solid transparent;border-top:4px solid #000"></div>
<div class="t" style="left:952px;top:301px;font-size:10.6px;width:83px;overflow:hidden">Date Completed</div>
<div class="a" style="left:1259px;top:297px;width:17px;height:19px;border:1px solid #a0a0a0;background:linear-gradient(#fafafa 0,#f0f0f0 45%,#d8d8d8 55%,#e0e0e0)"></div>
<div class="a" style="left:1263px;top:304px;width:0;height:0;border-left:4px solid transparent;border-right:4px solid transparent;border-top:4px solid #000"></div>
<div class="a" style="left:935px;top:127px;width:1px;height:404px;background:#a0a0a0"></div>
<div class="a" style="left:935px;top:531px;width:342px;height:1px;background:#a0a0a0"></div>
<div class="a" style="left:933px;top:537px;width:346px;height:436px;background:#fff;border:1px solid #000;border-radius:3px 3px 0 0"></div>
<div class="a" style="left:935px;top:539px;width:342px;height:19px;border:1px solid #ececec;border-radius:3px;background:#fff"></div>
<div class="t" style="left:939px;top:544px;font-size:10.6px">Note</div>
<div class="a" style="left:1228px;top:542px;width:14px;height:14px;border:1px solid #505a66;border-radius:2px;background:linear-gradient(#e8ecf2,#c4ccd8)"></div>
<div class="a" style="left:1229px;top:543px;width:12px;height:12px;border:1px solid #f4f6f8"></div>
<div class="a" style="left:1232px;top:546px;width:6px;height:5px;border:1.5px solid #404852;background:#dde2ea"></div>
<svg class="a" style="left:1246px;top:542px" width="11" height="13" viewBox="0 0 11 13"><path d="M2 1.5h7M3.5 1.5v5M7.5 1.5v5M1 6.5h9M5.5 6.5v6" stroke="#8a8a8a" stroke-width="1.3" fill="none"/></svg>
<div class="a" style="left:1260px;top:542px;width:14px;height:14px;border:1px solid #4a1a18;border-radius:2px;background:radial-gradient(ellipse at 50% 40%,#c86a68 0,#b85450 45%,#d89088 100%)"></div>
<svg class="a" style="left:1263px;top:545px" width="8" height="8" viewBox="0 0 8 8"><path d="M1.5 1.5l5 5M6.5 1.5l-5 5" stroke="#fff" stroke-width="1.7"/></svg>
<div class="a" style="left:934px;top:559px;width:344px;height:31px;background:linear-gradient(#fafbfe 0,#eef0f8 30%,#d8ddef 55%,#d9ddef 100%);border-bottom:1px solid #9ca1ac"></div>
<div class="a" style="left:939px;top:565px;width:2px;height:23px;background:repeating-linear-gradient(#a4aac0 0 2px,transparent 2px 4px)"></div>
<svg class="a" style="left:947px;top:567px" width="18" height="18" viewBox="0 0 18 18"><path d="M1 13l6-6 3 3-6 6z" fill="#c8ccd2" stroke="#8c9098"/><rect x="9" y="2" width="7" height="9" fill="#e8eaee" stroke="#a0a4ac"/></svg>
<div class="a" style="left:970px;top:566px;width:1px;height:22px;background:#8a90a0;box-shadow:1px 0 0 #fff"></div>
<svg class="a" style="left:978px;top:568px" width="16" height="17" viewBox="0 0 16 17"><rect x="1.5" y="1.5" width="11" height="14" fill="#f5f7fb" stroke="#8d96a8"/><circle cx="7" cy="8" r="3" fill="#cfe6f5" stroke="#7fa0c0"/><path d="M9 10l4 4" stroke="#c0662a" stroke-width="2"/></svg>
<svg class="a" style="left:1001px;top:568px" width="16" height="17" viewBox="0 0 16 17"><rect x="3.5" y="1.5" width="9" height="5" fill="#fff" stroke="#8a8f99"/><rect x="1.5" y="5.5" width="13" height="6" rx="1" fill="#d7dade" stroke="#7d828c"/><rect x="3.5" y="10.5" width="9" height="5" fill="#fff" stroke="#8a8f99"/></svg>
<div class="a" style="left:1023px;top:566px;width:1px;height:22px;background:#8a90a0;box-shadow:1px 0 0 #fff"></div>
<div class="a" style="left:1031px;top:569px;width:14px;height:14px;border:1px solid #78a8d0;border-radius:1px;background:linear-gradient(#f0f8fc,#d0e8f8)"></div>
<div class="t" style="left:1034px;top:571px;font-size:11px;font-weight:bold;color:#5a8cbc;font-family:'Liberation Serif';">B</div>
<div class="a" style="left:1055px;top:569px;width:14px;height:14px;border:1px solid #78a8d0;border-radius:1px;background:linear-gradient(#f0f8fc,#d0e8f8)"></div>
<div class="t" style="left:1058px;top:571px;font-size:11px;font-weight:bold;color:#5a8cbc;font-family:'Liberation Serif';font-style:italic;">I</div>
<div class="a" style="left:1079px;top:569px;width:14px;height:14px;border:1px solid #78a8d0;border-radius:1px;background:linear-gradient(#f0f8fc,#d0e8f8)"></div>
<div class="t" style="left:1082px;top:571px;font-size:11px;font-weight:bold;color:#5a8cbc;font-family:'Liberation Serif';text-decoration:underline;">U</div>
<div class="a" style="left:1101px;top:566px;width:1px;height:22px;background:#8a90a0;box-shadow:1px 0 0 #fff"></div>
<div class="a" style="left:1108px;top:569px;width:14px;height:14px;border:1px solid #78a8d0;border-radius:1px;background:linear-gradient(#f0f8fc,#d4eaf8)"></div>
<svg class="a" style="left:1108px;top:569px" width="14" height="14" viewBox="0 0 14 14"><path d="M3 3.5h8M3 5.5h5M3 7.5h8M3 9.5h5M3 11.5h7" stroke="#30a040" stroke-width="1"/></svg>
<div class="a" style="left:1132px;top:569px;width:14px;height:14px;border:1px solid #78a8d0;border-radius:1px;background:linear-gradient(#f0f8fc,#d4eaf8)"></div>
<svg class="a" style="left:1132px;top:569px" width="14" height="14" viewBox="0 0 14 14"><path d="M3 3.5h8M4.5 5.5h5M3 7.5h8M4.5 9.5h5M3.5 11.5h7" stroke="#30a040" stroke-width="1"/></svg>
<svg class="a" style="left:1156px;top:569px" width="16" height="15" viewBox="0 0 16 15"><circle cx="2.5" cy="2.5" r="1.8" fill="#3a5ab0"/><circle cx="2.5" cy="7.5" r="1.8" fill="#3a5ab0"/><circle cx="2.5" cy="12.5" r="1.8" fill="#3a5ab0"/><path d="M6 2.5h9M6 7.5h9M6 12.5h9" stroke="#6a9a50" stroke-width="2"/></svg>
<svg class="a" style="left:1266px;top:567px" width="10" height="7" viewBox="0 0 10 7"><path d="M1 .8l3 2.7-3 2.7M5.5 .8l3 2.7-3 2.7" fill="none" stroke="#000" stroke-width="1.5"/></svg>
<div class="a" style="left:1267px;top:581px;width:0;height:0;border-left:3px solid transparent;border-right:3px solid transparent;border-top:3px solid #000"></div>
<div class="a" style="left:934px;top:590px;width:344px;height:351px;background:#fff"></div>
<svg class="a" style="left:950px;top:600px" width="10" height="9" viewBox="0 0 10 9"><ellipse cx="5" cy="4.5" rx="3.5" ry="3" fill="none" stroke="#111" stroke-width="1.1"/></svg>
<svg class="a" style="left:950px;top:638px" width="10" height="9" viewBox="0 0 10 9"><ellipse cx="5" cy="4.5" rx="3.5" ry="3" fill="none" stroke="#111" stroke-width="1.1"/></svg>
<svg class="a" style="left:950px;top:676px" width="10" height="9" viewBox="0 0 10 9"><ellipse cx="5" cy="4.5" rx="3.5" ry="3" fill="none" stroke="#111" stroke-width="1.1"/></svg>
<div class="t" style="left:973px;top:594px;font-size:15px;line-height:19px;font-family:'Liberation Serif'">Define the project’s requirements for part-time
and full-time workforce.
   Identify project roles and functions that can be
covered by services of one-time contractors.
   Identify project roles and functions that need
service of permanent project staff.</div>
<div class="a" style="left:935px;top:590px;width:342px;height:352px;border:1px solid #b8b8b8;border-top:none"></div>
<div class="a" style="left:1041px;top:948px;width:236px;height:1px;background:#a8a8a8"></div>
<div class="a" style="left:1276px;top:941px;width:1px;height:8px;background:#a8a8a8"></div>
<div class="a" style="left:935px;top:945px;width:5px;height:1px;background:#a8a8a8"></div>
<div class="a" style="left:939px;top:945px;width:1px;height:3px;background:#a8a8a8"></div>
<div class="a" style="left:939px;top:947px;width:32px;height:23px;background:#fff;border:1px solid #a0a0a0;border-top:none;border-radius:0 0 0 2px"></div>
<div class="t" style="left:943px;top:954px;font-size:11px">Note</div>
<div class="a" style="left:970px;top:948px;width:71px;height:21px;background:#d4d4d4;border-left:1px solid #808080;border-right:1px solid #a8a8a8;border-bottom:1px solid #a8a8a8"></div>
<div class="t" style="left:973px;top:953px;font-size:11px">Search result</div>
<div class="t" style="left:1129px;top:956px;font-size:15px;font-weight:bold;font-family:'Liberation Mono'">todolistsoft.com</div>
</body></html>
